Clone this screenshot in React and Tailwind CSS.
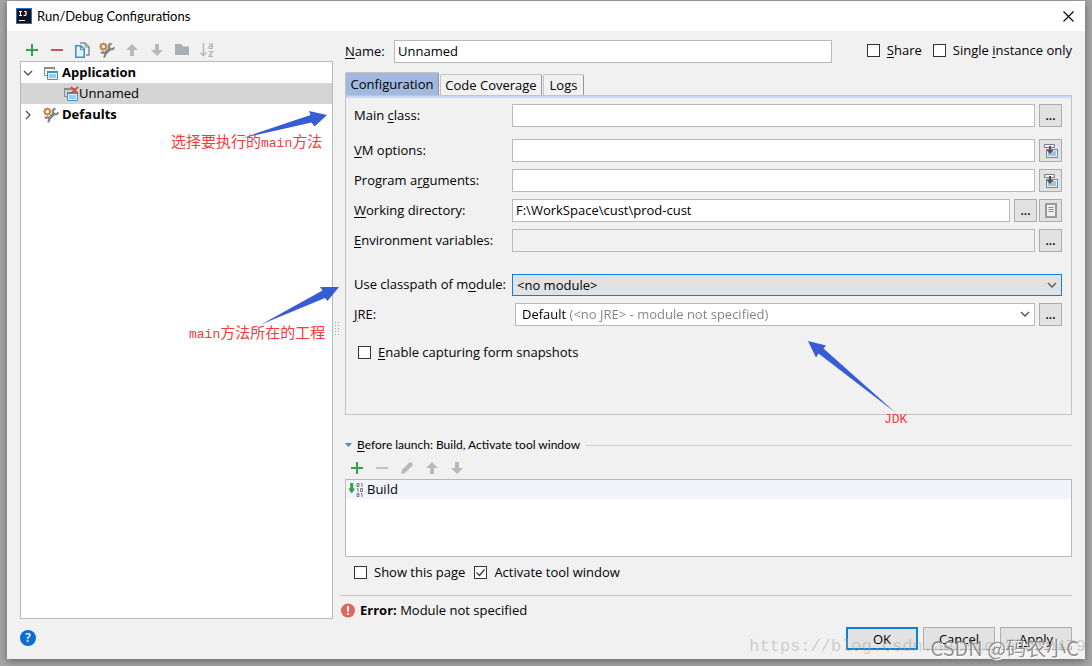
import { useState } from "react";

/* ---------- icons ---------- */

const Icon = ({ children }) => (
  <svg width="16" height="16" viewBox="0 0 16 16" className="block shrink-0" aria-hidden="true">
    {children}
  </svg>
);

const PlusIcon = () => (
  <Icon>
    <path d="M8 2v12M2 8h12" stroke="#2fa24c" strokeWidth="2" />
  </Icon>
);

const MinusIcon = ({ color = "#c9544b" }) => (
  <Icon>
    <path d="M2 8h12" stroke={color} strokeWidth="2" />
  </Icon>
);

const CopyIcon = () => (
  <Icon>
    <path d="M6 1h5l4 4v8h-3" fill="none" stroke="#8c8c8c" strokeWidth="1.5" />
    <path d="M11 1v4h4" fill="none" stroke="#8c8c8c" />
    <path d="M1.8 3.8h5l3.4 3.4v8H1.8z" fill="#e6f3fb" stroke="#4a90bd" strokeWidth="1.6" />
    <path d="M6.5 3.8v4h3.7" fill="none" stroke="#4a90bd" />
  </Icon>
);

const ToolsIcon = () => (
  <Icon>
    <circle cx="4.4" cy="4.6" r="2.7" fill="none" stroke="#c08a4c" strokeWidth="2" />
    <path
      d="M4.4 .5v1.4M4.4 7.3v1.4M.4 4.6h1.4M7 4.6h1.4M1.5 1.7l1 1M6.4 6.6l1 1M7.3 1.7l-1 1M1.5 7.5l1-1"
      stroke="#c08a4c"
      strokeWidth="1.4"
    />
    <path d="M5.4 12.2l6.3-6.2" stroke="#858585" strokeWidth="3.2" />
    <path d="M12.6 1.9a2.7 2.7 0 1 0 2.6 3.3" fill="none" stroke="#858585" strokeWidth="2.2" />
    <path d="M2 11.2a2.4 2.4 0 1 1 2.6 3.8" fill="none" stroke="#858585" strokeWidth="2.2" />
  </Icon>
);

const UpIcon = () => (
  <Icon>
    <path d="M8 2l6 6h-4v6H6V8H2z" fill="#b9b9b9" />
  </Icon>
);

const DownIcon = () => (
  <Icon>
    <path d="M8 14l6-6h-4V2H6v6H2z" fill="#b9b9b9" />
  </Icon>
);

const FolderIcon = () => (
  <Icon>
    <path d="M1 2h6l2 2.5h6V13H1z" fill="#a5b0b8" />
  </Icon>
);

const SortIcon = () => (
  <Icon>
    <path d="M4.5 1v12M1.5 10.5l3 3 3-3" fill="none" stroke="#b5b5b5" strokeWidth="1.4" />
    <path
      d="M10 2.2h3.4v4.3H10.2V4.4h3.2M9.8 9.7h3.8L10 14.3h4"
      fill="none"
      stroke="#b5b5b5"
      strokeWidth="1.2"
    />
  </Icon>
);

const PencilIcon = () => (
  <Icon>
    <path d="M2 14l1-4.2 7.4-7.3c1.6-1.2 4.2 1 3 3L6.2 13z" fill="#b9b9b9" />
  </Icon>
);

const AppIcon = ({ broken }) => (
  <Icon>
    <path d="M4 10.5H1.5v-8h10V5" fill="none" stroke="#8a8a8a" />
    <path d="M1 2h11v2H1z" fill="#8a8a8a" />
    <path d="M4.5 6.5h10v8h-10z" fill="#e6f3fb" stroke="#4a90bd" />
    <path d="M4 6h11v2H4z" fill="#4a90bd" />
    <path d="M6 9h7v4H6z" fill="#92cdf2" />
    {broken && <path d="M8 .8l7 6.8M15 .8L8 7.6" stroke="#d4473c" strokeWidth="1.7" />}
  </Icon>
);

const ExpandIcon = () => (
  <Icon>
    <path d="M3 6h12v9H3z" fill="#4a94c2" />
    <path d="M4 7h10v7H4z" fill="#e6f1f8" />
    <path d="M5 8h8v5H5z" fill="#a9c3d3" />
    <path d="M1.5 1.5h10v3h-10z" fill="#f4f4f4" stroke="#7c7c7c" />
    <path d="M6 3h2v4h2.5L7 11 3.5 7H6z" fill="#555" />
  </Icon>
);

const DocumentIcon = () => (
  <Icon>
    <path d="M3 1h10v13H3z" fill="#efefef" stroke="#9a9a9a" strokeWidth="2" />
    <path d="M5.5 4.5h5M5.5 6.5h5M5.5 8.5h5" stroke="#8a8a8a" />
  </Icon>
);

const BuildIcon = () => (
  <Icon>
    <path d="M2.2 1h3v5.5h2L3.7 11.5.2 6.5h2z" fill="#2fa24c" />
    <path
      d="M9 1.5h2v3H9zM13 1.5h1v3.4M9 6.5h1v3.4M12.5 6.5h2v3h-2zM9 11.5h2v3H9zM13 11.5h1v3.4"
      fill="none"
      stroke="#757575"
    />
  </Icon>
);

const ErrorIcon = () => (
  <Icon>
    <circle cx="8" cy="7.5" r="7" fill="#de685c" />
    <path d="M7 3h2v5.5H7zM7 10h2v2H7z" fill="#fff" />
  </Icon>
);

const Chevron = ({ className }) => (
  <svg width="10" height="10" viewBox="0 0 10 10" className={className} aria-hidden="true">
    <path d="M1 3l4 4 4-4" fill="none" stroke="#555" strokeWidth="1.4" />
  </svg>
);

const Logo = () => (
  <svg width="16" height="16" viewBox="0 0 16 16" className="block" aria-hidden="true">
    <rect x=".5" y=".5" width="15" height="15" fill="#10131a" stroke="#1d6fc9" />
    <path
      d="M3 3.5h3M4.5 3.5v4M3 7.5h3M8 3.5h2.5M10 3.5v3q0 1-2.4 1"
      fill="none"
      stroke="#fff"
      strokeWidth="1.2"
    />
    <path d="M3 12.5h6" stroke="#fff" />
  </svg>
);

/* ---------- form pieces ---------- */

const ToolButton = ({ label, children }) => (
  <button type="button" aria-label={label}>
    {children}
  </button>
);

const SquareButton = ({ label, children }) => (
  <button
    type="button"
    aria-label={label}
    className="flex h-[23px] w-[23px] shrink-0 items-center justify-center border border-[#adadad] bg-[#e2e2e2]"
  >
    {children || <span className="text-[12px] font-semibold">...</span>}
  </button>
);

const Checkbox = ({ id, defaultChecked, children }) => (
  <label htmlFor={id} className="flex h-[13px] items-center gap-[7px] whitespace-nowrap">
    <span className="relative block size-[13px]">
      <input
        id={id}
        type="checkbox"
        defaultChecked={defaultChecked}
        className="peer block size-[13px] appearance-none border border-[#333] bg-white"
      />
      <svg
        viewBox="0 0 13 13"
        className="pointer-events-none absolute inset-0 hidden peer-checked:block"
        aria-hidden="true"
      >
        <path d="M2.5 6.5l3 3 5-6" fill="none" stroke="#333" strokeWidth="1.2" />
      </svg>
    </span>
    <span className="pb-[2px]">{children}</span>
  </label>
);

const TextField = ({ id, ...props }) => (
  <input
    id={id}
    type="text"
    className="h-[23px] min-w-0 flex-1 border border-[#b9b9b9] bg-white px-[3px] pb-[2px] disabled:bg-[#f1f1f1]"
    {...props}
  />
);

const Row = ({ id, label, className, children }) => (
  <div className={`flex items-center gap-1 ${className || ""}`}>
    <label htmlFor={id} className="w-[154px] shrink-0 pb-[2px] whitespace-nowrap">
      {label}
    </label>
    {children}
  </div>
);

const toolbar = [
  { label: "Add", icon: <PlusIcon /> },
  { label: "Remove", icon: <MinusIcon /> },
  { label: "Copy", icon: <CopyIcon /> },
  { label: "Edit defaults", icon: <ToolsIcon /> },
  { label: "Move up", icon: <UpIcon /> },
  { label: "Move down", icon: <DownIcon /> },
  { label: "Create folder", icon: <FolderIcon /> },
  { label: "Sort", icon: <SortIcon /> },
];

const launchToolbar = [
  { label: "Add task", icon: <PlusIcon /> },
  { label: "Remove task", icon: <MinusIcon color="#c0c0c0" /> },
  { label: "Edit task", icon: <PencilIcon /> },
  { label: "Move task up", icon: <UpIcon /> },
  { label: "Move task down", icon: <DownIcon /> },
];

const tabs = [
  { name: "Configuration", width: "w-[94px]" },
  { name: "Code Coverage", width: "w-[102px]" },
  { name: "Logs", width: "w-[41px]" },
];

/* ---------- sections ---------- */

const Sidebar = () => (
  <aside className="flex w-[313px] shrink-0 flex-col">
    <div className="flex h-[30px] items-center gap-[9px] pt-2 pl-1">
      {toolbar.map((item) => (
        <ToolButton key={item.label} label={item.label}>
          {item.icon}
        </ToolButton>
      ))}
    </div>
    <ul className="flex-1 border border-[#b9b9b9] bg-white">
      <li className="flex h-[21px] items-center pl-[2px] font-bold">
        <Chevron />
        <span className="mr-[3px] ml-[10px]">
          <AppIcon />
        </span>
        <span className="pb-[2px]">Application</span>
      </li>
      <li className="flex h-[21px] items-center bg-[#d4d4d4] pl-[42px]">
        <AppIcon broken />
        <span className="pb-[2px]">Unnamed</span>
      </li>
      <li className="flex h-[21px] items-center pl-[2px] font-bold">
        <Chevron className="-rotate-90" />
        <span className="mr-[3px] ml-[10px]">
          <ToolsIcon />
        </span>
        <span className="pb-[2px]">Defaults</span>
      </li>
    </ul>
  </aside>
);

const ConfigurationPanel = () => (
  <div className="flex-1 border border-[#c4c4c4]">
    <div className="h-[2px] bg-[#c6daf2]" />
    <div className="pt-[6px] pr-[9px] pl-2">
      <Row id="main-class" label={<>Main <u>c</u>lass:</>}>
        <TextField id="main-class" />
        <SquareButton label="Browse main class" />
      </Row>
      <Row id="vm-options" className="mt-3" label={<><u>V</u>M options:</>}>
        <TextField id="vm-options" />
        <SquareButton label="Expand VM options">
          <ExpandIcon />
        </SquareButton>
      </Row>
      <Row id="arguments" className="mt-[7px]" label={<>Program a<u>r</u>guments:</>}>
        <TextField id="arguments" />
        <SquareButton label="Expand arguments">
          <ExpandIcon />
        </SquareButton>
      </Row>
      <Row id="directory" className="mt-[7px]" label={<><u>W</u>orking directory:</>}>
        <TextField id="directory" defaultValue="F:\WorkSpace\cust\prod-cust" />
        <div className="flex gap-[2px]">
          <SquareButton label="Browse directory" />
          <SquareButton label="Insert macro">
            <DocumentIcon />
          </SquareButton>
        </div>
      </Row>
      <Row id="environment" className="mt-[7px]" label={<><u>E</u>nvironment variables:</>}>
        <TextField id="environment" disabled />
        <SquareButton label="Edit variables" />
      </Row>
      <Row id="module" className="mt-[22px]" label={<>Use classpath of m<u>o</u>dule:</>}>
        <div className="relative flex-1">
          <select
            id="module"
            className="block h-[22px] w-full appearance-none border border-[#0f7fd7] bg-[#e2e2e2] px-1 pb-px"
          >
            <option>&lt;no module&gt;</option>
          </select>
          <Chevron className="pointer-events-none absolute top-[6px] right-[5px]" />
        </div>
      </Row>
      <Row id="jre" className="mt-[7px]" label={<><u>J</u>RE:</>}>
        <div className="relative ml-[3px] flex-1 border border-[#b9b9b9] bg-white">
          {/* name in black, the details after it in gray */}
          <select
            id="jre"
            className="block h-[21px] w-full appearance-none bg-linear-to-r from-black from-[52px] to-[#808080] to-[52px] bg-clip-text px-[6px] pb-[2px] text-transparent"
          >
            <option>Default (&lt;no JRE&gt; - module not specified)</option>
          </select>
          <Chevron className="pointer-events-none absolute top-[5px] right-1" />
        </div>
        <SquareButton label="Browse JRE" />
      </Row>
      <div className="mt-5 pl-1">
        <Checkbox id="snapshots">
          <u>E</u>nable capturing form snapshots
        </Checkbox>
      </div>
    </div>
  </div>
);

const BeforeLaunch = () => (
  <section className="mt-[21px]">
    <div className="flex h-[18px] items-center">
      <svg width="7" height="5" viewBox="0 0 7 5" className="mr-[5px]" aria-hidden="true">
        <path d="M0 0h7L3.5 4z" fill="#3f8fc0" />
      </svg>
      <h2 className="font-[Lato,sans-serif] text-[12px] whitespace-nowrap">
        <u>B</u>efore launch: Build, Activate tool window
      </h2>
      <div className="ml-[6px] h-px flex-1 bg-[#cfcfcf]" />
    </div>
    <div className="mt-[6px] flex gap-[9px] pl-1">
      {launchToolbar.map((item) => (
        <ToolButton key={item.label} label={item.label}>
          {item.icon}
        </ToolButton>
      ))}
    </div>
    <ul className="mt-[3px] h-[78px] border border-[#b9b9b9] bg-white">
      <li className="flex h-[19px] items-center gap-[3px] bg-[#f1f4fb] pl-[2px]">
        <BuildIcon />
        <span className="pb-[2px]">Build</span>
      </li>
    </ul>
    <div className="mt-[9px] flex gap-[9px] pl-[9px]">
      <Checkbox id="show-page">Show this page</Checkbox>
      <Checkbox id="activate" defaultChecked>
        Activate tool window
      </Checkbox>
    </div>
  </section>
);

/* Hand-placed notes pointing at the fields */
const Annotations = () => (
  <div className="pointer-events-none absolute inset-0 font-['Liberation_Mono','Noto_Sans_CJK_SC',monospace] text-[15px] leading-5 text-[#f83a3a]">
    <svg width="1092" height="666" className="absolute top-0 left-0" fill="#385bd6" aria-hidden="true">
      <path d="M327 115L309 111 310.5 115 241 138.5 311.5 122.5 314.5 126.5z" />
      <path d="M339 287H320L322.5 290.5 261 324.5 325 298 327.5 301z" />
      <path d="M808 341L826 345.5 823.5 348.5 896 413 818.5 353.5 816 357.5z" />
    </svg>
    <p className="absolute top-[134px] left-[171px] whitespace-nowrap">
      选择要执行的<span className="text-[13px]">main</span>方法
    </p>
    <p className="absolute top-[325px] left-[189px] whitespace-nowrap">
      <span className="text-[13px]">main</span>方法所在的工程
    </p>
    <p className="absolute top-[410px] left-[884px] text-[13px]">JDK</p>
  </div>
);

const Watermarks = () => (
  <div className="pointer-events-none absolute inset-0 whitespace-nowrap">
    <p className="absolute right-[6px] bottom-[7px] font-['Liberation_Mono',monospace] text-[17px] leading-6 text-[#a0a096]/45">
      https://blog.csdn.net/qq_34039479
    </p>
    <p className="absolute right-[13px] bottom-[6px] font-['Noto_Sans_CJK_SC',sans-serif] text-[20px] leading-6 text-[#777]/80 [text-shadow:1px_1px_0_#fff]">
      CSDN @码农小C
    </p>
  </div>
);

export default function App() {
  const [activeTab, setActiveTab] = useState("Configuration");

  return (
    <div className="relative flex min-h-screen flex-col bg-[#a6a6a6] px-[7px] pt-px pb-[7px] font-['Open_Sans','Noto_Sans_CJK_SC',sans-serif] text-[13px] leading-[18px] text-black [&_u]:underline-offset-2">
      <div className="flex flex-1 flex-col bg-[#f1f1f1] shadow-[0_2px_8px_rgba(0,0,0,0.4)]">
        <header className="flex h-[30px] items-center bg-white pr-[11px] pl-[9px]">
          <Logo />
          <h1 className="ml-[5px] flex-1 font-[Lato,sans-serif]">Run/Debug Configurations</h1>
          <button type="button" aria-label="Close">
            <svg width="11" height="11" viewBox="0 0 11 11" className="block" aria-hidden="true">
              <path d="M.5 .5l10 10M10.5 .5l-10 10" stroke="#000" strokeWidth="1.1" />
            </svg>
          </button>
        </header>

        <div className="flex flex-1 pr-[13px] pl-[13px]">
          <Sidebar />

          {/* Splitter grip */}
          <div className="flex w-[7px] shrink-0 items-center pt-[7px] pl-px">
            <div className="h-4 w-[5px] bg-[radial-gradient(#a8a8a8_1px,transparent_1px)] bg-size-[3px_3px]" />
          </div>

          <main className="flex min-w-0 flex-1 flex-col">
            <div className="flex flex-1 flex-col pl-[5px]">
              <div className="mt-[9px] flex items-center">
                <label htmlFor="name" className="w-[49px] shrink-0 pb-[2px]">
                  <u>N</u>ame:
                </label>
                <TextField id="name" defaultValue="Unnamed" />
                <div className="ml-[35px] flex gap-[11px] pb-[2px]">
                  <Checkbox id="share">
                    <u>S</u>hare
                  </Checkbox>
                  <Checkbox id="single">
                    Single <u>i</u>nstance only
                  </Checkbox>
                </div>
              </div>

              <div role="tablist" className="mt-[9px] flex items-end gap-px">
                {tabs.map((tab) => (
                  <button
                    key={tab.name}
                    type="button"
                    role="tab"
                    aria-selected={activeTab === tab.name}
                    onClick={() => setActiveTab(tab.name)}
                    className={`rounded-t-[2px] border-t border-r border-l border-t-[#c4c4c4] border-r-[#999] border-l-[#c4c4c4] whitespace-nowrap ${tab.width} ${
                      activeTab === tab.name ? "h-[23px] bg-[#a1b8df]" : "h-[21px]"
                    }`}
                  >
                    {tab.name}
                  </button>
                ))}
              </div>
              <ConfigurationPanel />
              <BeforeLaunch />
            </div>

            <div className="mt-4 flex h-6 items-center gap-1 border-t border-[#c9c9c9] pt-[6px]">
              <ErrorIcon />
              <p className="pb-[2px]">
                <b>Error:</b> Module not specified
              </p>
            </div>
          </main>
        </div>

        <footer className="flex h-10 items-start justify-between pt-2 pr-[13px] pl-[13px]">
          <button
            type="button"
            aria-label="Help"
            className="mt-[3px] size-4 rounded-full bg-[#0a6fd0] text-center text-[12px] leading-4 font-semibold text-white"
          >
            ?
          </button>
          <div className="flex gap-[5px]">
            <button type="button" className="h-[23px] w-[72px] border-2 border-[#0f7fd7] bg-[#e2e2e2]">
              OK
            </button>
            <button type="button" className="h-[23px] w-[72px] border border-[#adadad] bg-[#e2e2e2]">
              Cancel
            </button>
            <button type="button" className="h-[23px] w-[72px] border border-[#adadad] bg-[#e2e2e2]">
              <u>A</u>pply
            </button>
          </div>
        </footer>
      </div>

      <Annotations />
      <Watermarks />
    </div>
  );
}
